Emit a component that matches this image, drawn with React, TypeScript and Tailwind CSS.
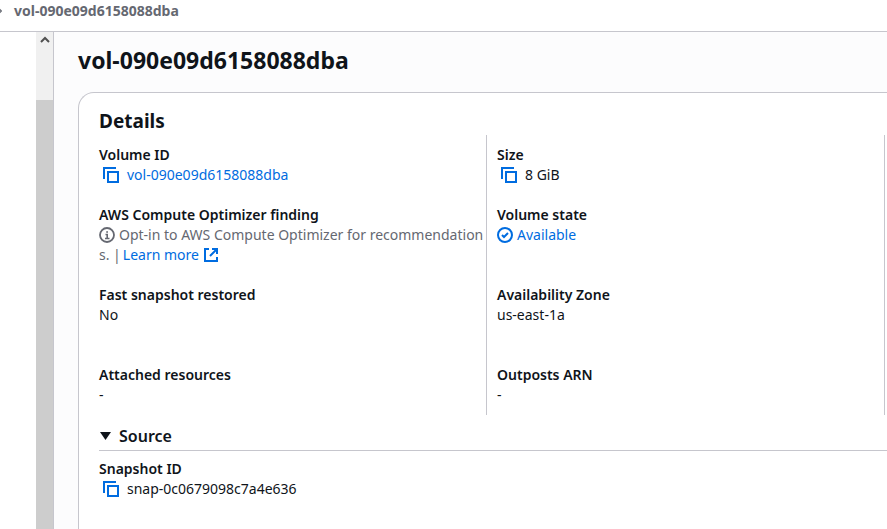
import type { ReactNode } from 'react';

function CopyIcon() {
  return (
    <svg viewBox="0 0 16 16" className="block size-4" fill="none" stroke="currentColor" strokeWidth="2" aria-hidden="true">
      <path d="M1 12V1h12" />
      <path d="M5 5h10v10H5z" />
    </svg>
  );
}

function InfoIcon() {
  return (
    <svg viewBox="0 0 16 16" className="size-4 shrink-0" fill="none" stroke="currentColor" aria-hidden="true">
      <circle cx="8" cy="8" r="7" strokeWidth="1.8" />
      <path d="M6.500 7.500H8.200V11M6 11.500h4.500M7.200 5h1.800" strokeWidth="1.600" />
    </svg>
  );
}

function CheckIcon() {
  return (
    <svg viewBox="0 0 16 16" className="size-4 shrink-0" fill="none" stroke="currentColor" strokeWidth="2" aria-hidden="true">
      <circle cx="8" cy="8" r="7" />
      <path d="m5 8 2 2 4-4" />
    </svg>
  );
}

function ExternalIcon() {
  return (
    <svg viewBox="0 0 16 16" className="size-4 shrink-0" fill="none" stroke="currentColor" strokeWidth="2" aria-hidden="true">
      <path d="M6 2H2v12h12v-4" />
      <path d="M9 2h5v5M14 2 7 9" />
    </svg>
  );
}

function CopyValue({ label, children }: { label: string; children: ReactNode }) {
  return (
    <span className="flex items-center gap-2 pl-1">
      <button type="button" aria-label={label} className="text-[#006ce0]">
        <CopyIcon />
      </button>
      {children}
    </span>
  );
}

function Field({ label, children, tall = false }: { label: string; children: ReactNode; tall?: boolean }) {
  return (
    <div className={tall ? 'min-h-[60px]' : 'min-h-10'}>
      <dt className="font-semibold">{label}</dt>
      <dd>{children}</dd>
    </div>
  );
}

export default function App() {
  return (
    <div className="flex h-screen flex-col overflow-hidden bg-white font-['Noto_Sans','Open_Sans',sans-serif] text-sm leading-5 text-[#0f141a]">
      <nav aria-label="Breadcrumb" className="flex h-8 shrink-0 items-start gap-3 border-b border-[#c6c6cd] pt-px font-bold text-[#656871]">
        <svg viewBox="0 0 3 20" className="h-5 w-[2px]" fill="none" stroke="currentColor" strokeWidth="2" aria-hidden="true">
          <path d="m-1 7 3 3-3 3" />
        </svg>
        <span>vol-090e09d6158088dba</span>
      </nav>
      <div className="flex min-h-0 flex-1">
        <aside className="flex w-[54px] shrink-0 justify-end border-r border-[#c6c6cd]">
          <div className="flex w-[17px] flex-col bg-[#f0f0f0]">
            <div className="flex h-[68px] justify-center pt-1">
              <svg viewBox="0 0 10 8" className="h-2 w-[10px]" fill="none" stroke="#505050" strokeWidth="2" aria-hidden="true">
                <path d="m1 6 4-4 4 4" />
              </svg>
            </div>
            <div className="flex-1 bg-[#cdcdcd]" />
          </div>
        </aside>
        <main className="flex min-w-0 flex-1 flex-col bg-[#fcfcfd] pl-6">
          <h1 className="pt-3 text-[23px] leading-8 font-bold">vol-090e09d6158088dba</h1>
          <section className="mt-4 flex-1 rounded-tl-2xl border-t border-l border-[#c6c6cd] bg-white pt-4 pl-5">
            <h2 className="text-[19px] leading-6 font-bold">Details</h2>
            <div className="mt-[2px] grid grid-cols-[387fr_398fr_3fr]">
              <dl className="flex min-w-0 flex-col gap-5 py-[10px]">
                <Field label="Volume ID">
                  <CopyValue label="Copy volume ID">
                    <a href="#volume" className="text-[#006ce0]">vol-090e09d6158088dba</a>
                  </CopyValue>
                </Field>
                <Field label="AWS Compute Optimizer finding" tall>
                  <span className="flex items-center gap-1 whitespace-nowrap text-[#656871]">
                    <InfoIcon />
                    Opt-in to AWS Compute Optimizer for recommendation
                  </span>
                  <span className="flex items-center gap-0.5 text-[#656871]">
                    s. |
                    <a href="#learn-more" className="flex items-center gap-1 text-[#006ce0]">
                      Learn more
                      <ExternalIcon />
                    </a>
                  </span>
                </Field>
                <Field label="Fast snapshot restored" tall>No</Field>
                <Field label="Attached resources">-</Field>
              </dl>
              <dl className="flex min-w-0 flex-col gap-5 border-l border-[#c6c6cd] py-[10px] pl-[10px]">
                <Field label="Size">
                  <CopyValue label="Copy size">8 GiB</CopyValue>
                </Field>
                <Field label="Volume state" tall>
                  <span className="flex items-center gap-1 text-[#006ce0]">
                    <CheckIcon />
                    Available
                  </span>
                </Field>
                <Field label="Availability Zone" tall>us-east-1a</Field>
                <Field label="Outposts ARN">-</Field>
              </dl>
              <div className="border-l border-[#c6c6cd]" />
            </div>
            <button type="button" className="mt-2 flex w-full items-center gap-2 border-b border-[#c6c6cd] pt-[3px] pb-1 text-left text-base leading-5 font-semibold">
              <svg viewBox="0 0 12 10" className="h-[10px] w-3" fill="currentColor" aria-hidden="true">
                <path d="M1 1h11L6.500 9z" />
              </svg>
              Source
            </button>
            <dl className="mt-2">
              <Field label="Snapshot ID">
                <CopyValue label="Copy snapshot ID">snap-0c0679098c7a4e636</CopyValue>
              </Field>
            </dl>
          </section>
        </main>
      </div>
    </div>
  );
}
